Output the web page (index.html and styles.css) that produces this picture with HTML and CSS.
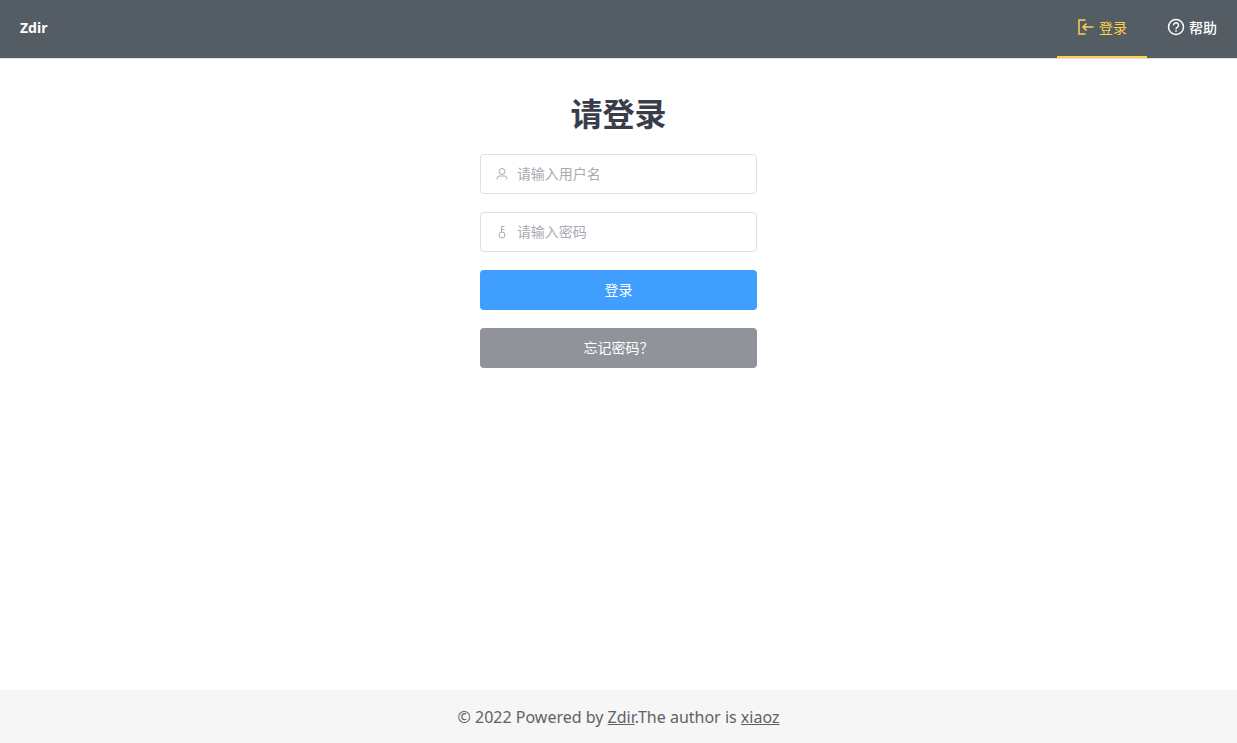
FILE: index.html
```html
<!DOCTYPE html>
<html lang="zh-CN">
<head>
<meta charset="UTF-8">
<meta name="viewport" content="width=device-width, initial-scale=1">
<title>Zdir</title>
<link rel="stylesheet" href="styles.css">
</head>
<body>
<header class="header">
  <a class="brand" href="#">Zdir</a>
  <nav class="menu">
    <a class="menu-item active" href="#" aria-current="page">
      <svg class="menu-icon" viewBox="0 0 18 18" aria-hidden="true"><path d="M8.500 2H2v14h6.500M16.500 9H6M9.500 5.500 6 9l3.500 3.500"/></svg>
      <span>登录</span>
    </a>
    <a class="menu-item" href="#">
      <svg class="menu-icon" viewBox="0 0 18 18" aria-hidden="true"><circle cx="9" cy="9" r="7.500"/><path d="M6.500 7.200a2.500 2.500 0 1 1 3.800 2.100c-.9.500-1.300.900-1.300 1.900M9 12.200v1.600"/></svg>
      <span>帮助</span>
    </a>
  </nav>
</header>
<main class="main">
  <form class="login">
    <h1 class="title">请登录</h1>
    <label class="field">
      <svg class="field-icon" viewBox="0 0 14 14" aria-hidden="true"><circle cx="7" cy="4.500" r="3"/><path d="M2 12.500v-1a2.500 2.500 0 0 1 2.500-2.500h5a2.500 2.500 0 0 1 2.500 2.500v1"/></svg>
      <input class="field-input" type="text" placeholder="请输入用户名" aria-label="用户名">
    </label>
    <label class="field">
      <svg class="field-icon" viewBox="0 0 14 14" aria-hidden="true"><circle cx="7" cy="10" r="3"/><path d="M6.500 7V1.500h3M6.500 4.500h3"/></svg>
      <input class="field-input" type="password" placeholder="请输入密码" aria-label="密码">
    </label>
    <button class="button primary" type="button">登录</button>
    <button class="button info" type="button">忘记密码？</button>
  </form>
</main>
<footer class="footer">
  <p class="copyright">© 2022 Powered by <a href="#">Zdir</a>.The author is <a href="#">xiaoz</a></p>
</footer>
</body>
</html>
```
FILE: styles.css
```css
* {
  box-sizing: border-box;
}

body {
  margin: 0;
  min-height: 100vh;
  display: flex;
  flex-direction: column;
  background: #fff;
  color: #303133;
  font-family: "Noto Sans", "Noto Sans CJK SC", sans-serif;
  font-size: 14px;
}

a {
  color: inherit;
}

.header {
  display: flex;
  align-items: stretch;
  justify-content: space-between;
  height: 59px;
  border-bottom: 1px solid #dcdfe6;
  background: #545c64;
  color: #fff;
}

.brand {
  display: flex;
  align-items: center;
  padding: 0 20px 4px;
  font-weight: 700;
  text-decoration: none;
}

.menu {
  display: flex;
}

.menu-item {
  display: flex;
  align-items: center;
  gap: 4px;
  padding: 0 20px 2px;
  border-bottom: 2px solid transparent;
  font-weight: 500;
  text-decoration: none;
}

.menu-item.active {
  border-bottom-color: #ffd04b;
  color: #ffd04b;
  font-weight: 400;
}

.menu-icon {
  width: 18px;
  height: 18px;
  fill: none;
  stroke: currentColor;
  stroke-width: 1.5;
}

.main {
  flex: 1;
}

.login {
  display: flex;
  flex-direction: column;
  gap: 18px;
  width: calc(25% - 32px);
  min-width: 240px;
  margin: 0 auto;
  padding: 32px 0;
}

.title {
  margin: 0;
  padding-bottom: 2px;
  color: #393d49;
  font-family: "Noto Sans CJK SC", sans-serif;
  font-size: 32px;
  line-height: 43px;
  text-align: center;
}

.field {
  display: flex;
  align-items: center;
  gap: 8px;
  height: 40px;
  padding: 0 14px;
  border: 1px solid #dcdfe6;
  border-radius: 4px;
}

.field:focus-within {
  border-color: #409eff;
}

.field-icon {
  flex: none;
  width: 14px;
  height: 14px;
  fill: none;
  stroke: #a8abb2;
  stroke-width: 1;
}

.field-input {
  flex: 1;
  min-width: 0;
  padding: 0 0 2px;
  border: 0;
  outline: 0;
  background: none;
  color: #606266;
  font: inherit;
}

.field-input::placeholder {
  color: #a8abb2;
}

.button {
  height: 40px;
  padding: 0 20px 2px;
  border: 0;
  border-radius: 4px;
  color: #fff;
  font: inherit;
  cursor: pointer;
}

.primary {
  background: #409eff;
}

.info {
  background: #909399;
}

.footer {
  padding: 15px 20px 14px;
  background: #f6f6f6;
  color: #606266;
  text-align: center;
}

.copyright {
  margin: 0;
  font-size: 16px;
  line-height: 24px;
}
```
